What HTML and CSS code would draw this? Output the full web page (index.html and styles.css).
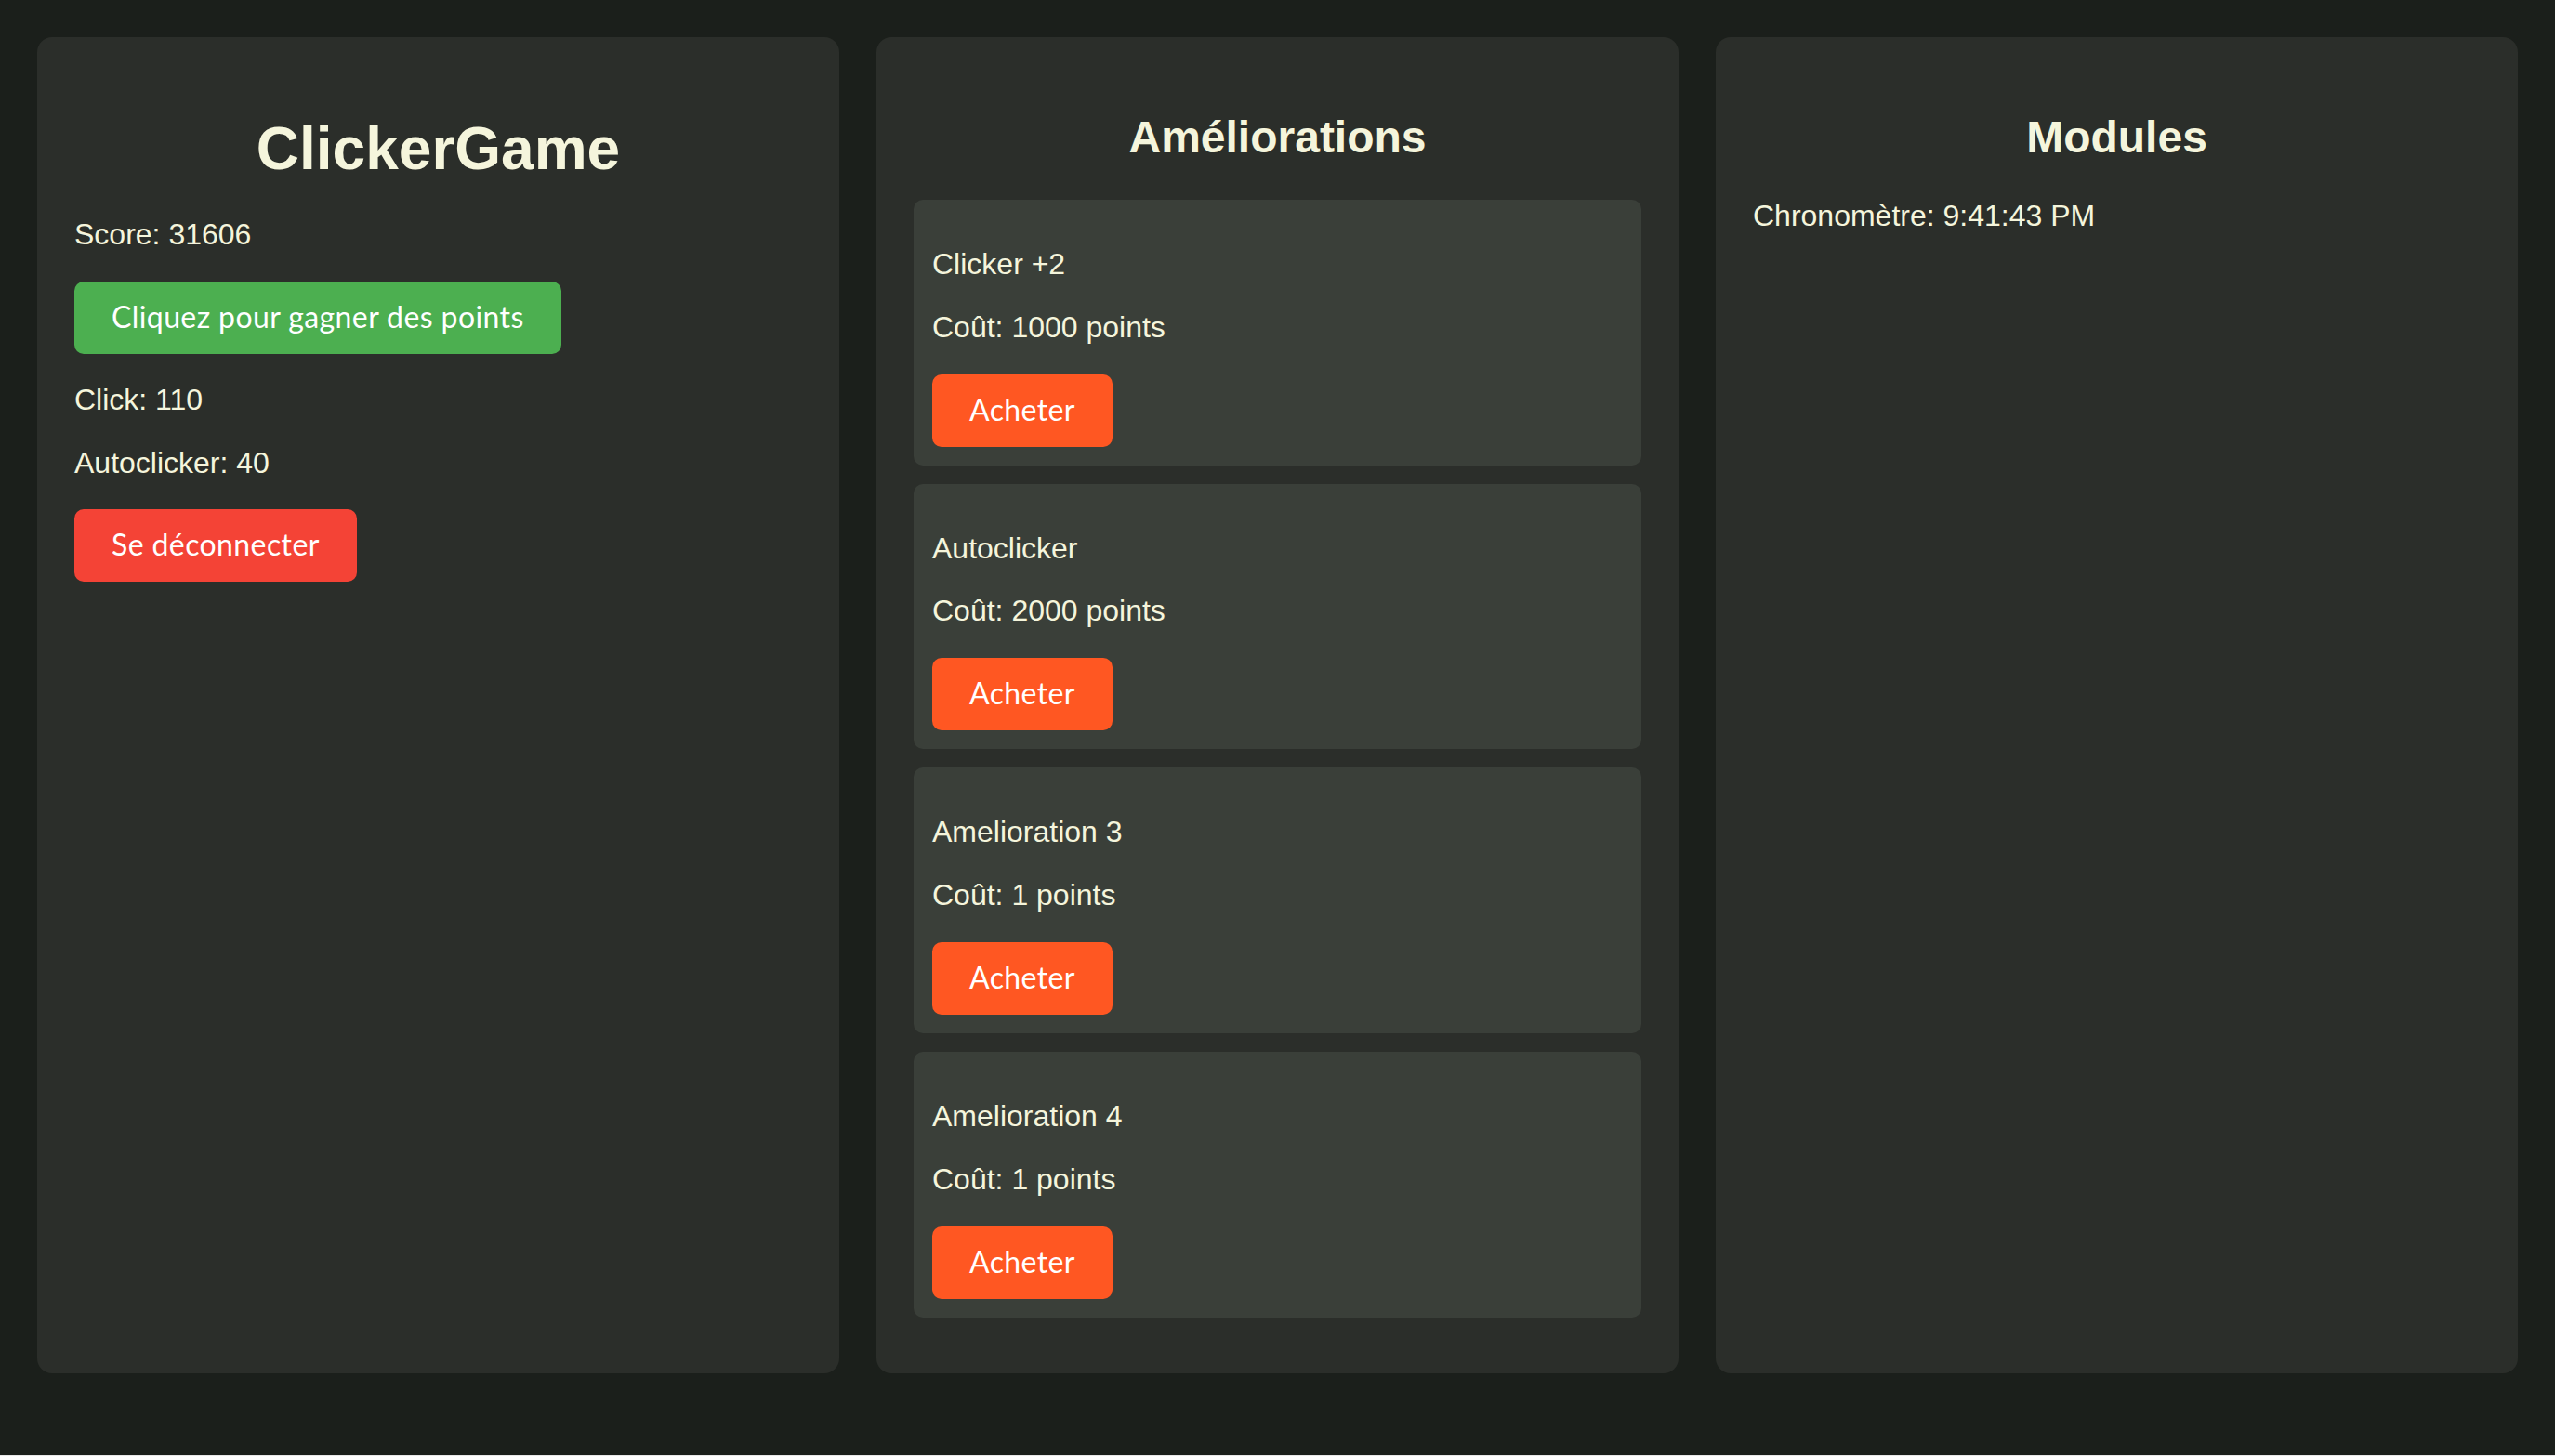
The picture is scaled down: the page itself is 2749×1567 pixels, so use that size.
FILE: index.html
```html
<!DOCTYPE html>
<html lang="fr">
<head>
<meta charset="utf-8">
<title>ClickerGame</title>
<link rel="stylesheet" href="styles.css">
</head>
<body>
<main class="app">
  <section class="panel">
    <h1 class="title">ClickerGame</h1>
    <p class="text">Score: 31606</p>
    <button class="btn btn-green">Cliquez pour gagner des points</button>
    <p class="text">Click: 110</p>
    <p class="text">Autoclicker: 40</p>
    <button class="btn btn-red">Se déconnecter</button>
  </section>
  <section class="panel">
    <h2 class="subtitle">Améliorations</h2>
    <div class="card">
      <p class="text">Clicker +2</p>
      <p class="text">Coût: 1000 points</p>
      <button class="btn btn-orange">Acheter</button>
    </div>
    <div class="card">
      <p class="text">Autoclicker</p>
      <p class="text">Coût: 2000 points</p>
      <button class="btn btn-orange">Acheter</button>
    </div>
    <div class="card">
      <p class="text">Amelioration 3</p>
      <p class="text">Coût: 1 points</p>
      <button class="btn btn-orange">Acheter</button>
    </div>
    <div class="card">
      <p class="text">Amelioration 4</p>
      <p class="text">Coût: 1 points</p>
      <button class="btn btn-orange">Acheter</button>
    </div>
  </section>
  <section class="panel">
    <h2 class="subtitle">Modules</h2>
    <p class="text">Chronomètre: 9:41:43 PM</p>
  </section>
</main>
</body>
</html>
```

FILE: styles.css
```css
html {
  background: #e8e8e8;
}

body {
  margin: 0;
  min-height: calc(100vh - 1px);
  background: #1b1f1b;
  color: #f5f5dc;
  font-family: "Liberation Sans", Arial, sans-serif;
}

.app {
  display: flex;
  gap: 40px;
  padding: 40px;
  align-items: stretch;
}

.panel {
  flex: 1 1 0;
  min-width: 0;
  background: #2b2e2a;
  border-radius: 16px;
  padding: 40px;
}

.title {
  font-size: 64px;
  font-weight: bold;
  text-align: center;
  margin: 43px 0 38px;
}

.subtitle {
  font-size: 48px;
  font-weight: bold;
  text-align: center;
  margin: 40px 0;
}

.text {
  font-size: 32px;
  line-height: 1.12;
  margin: 32px 0;
}

.card {
  background: #3a3f39;
  border-radius: 10px;
  padding: 20px;
  margin-bottom: 20px;
}

.btn {
  display: block;
  margin: 32px 0 0;
  border: none;
  border-radius: 10px;
  padding: 19px 40px 21px;
  font-family: Lato, "Open Sans", sans-serif;
  font-size: 32px;
  letter-spacing: 0.4px;
  line-height: 38px;
  color: #ffffff;
  cursor: pointer;
}

.btn-green {
  background: #4caf50;
}

.btn-red {
  background: #f44336;
}

.btn-orange {
  background: #ff5722;
}
```
